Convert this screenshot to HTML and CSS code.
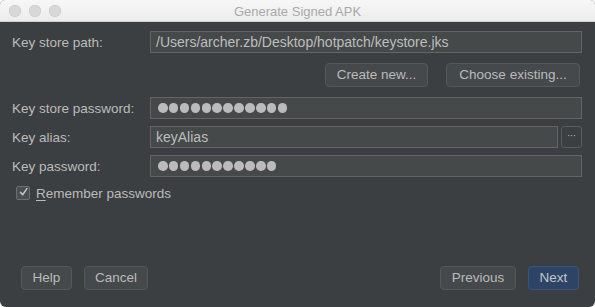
FILE: index.html
```html
<!DOCTYPE html>
<html>
<head>
<meta charset="utf-8">
<link rel="stylesheet" href="styles.css">
</head>
<body>
<div class="window">
  <div class="titlebar">
    <div class="lights">
      <span class="light"></span><span class="light"></span><span class="light"></span>
    </div>
    <div class="title">Generate Signed APK</div>
  </div>
  <div class="content">
    <div class="row">
      <label class="label">Key store path:</label>
      <div class="field">/Users/archer.zb/Desktop/hotpatch/keystore.jks</div>
    </div>
    <div class="actions">
      <button class="btn btn-create">Create new...</button>
      <button class="btn btn-choose">Choose existing...</button>
    </div>
    <div class="row">
      <label class="label">Key store password:</label>
      <div class="field dots">
        <i></i><i></i><i></i><i></i><i></i><i></i><i></i><i></i><i></i><i></i><i></i><i></i>
      </div>
    </div>
    <div class="row row-tight">
      <label class="label">Key alias:</label>
      <div class="field">keyAlias</div>
      <button class="more">···</button>
    </div>
    <div class="row row-tight">
      <label class="label">Key password:</label>
      <div class="field dots">
        <i></i><i></i><i></i><i></i><i></i><i></i><i></i><i></i><i></i><i></i><i></i>
      </div>
    </div>
    <div class="check-row">
      <span class="checkbox">
        <svg width="14" height="14" viewBox="0 0 14 14"><path d="M3 7.2 L6 10.5 L11.5 2.5" fill="none" stroke="#c8c8c8" stroke-width="1.8" stroke-linecap="round" stroke-linejoin="round"/></svg>
      </span>
      <span class="check-label"><u>R</u>emember passwords</span>
    </div>
  </div>
  <div class="footer">
    <div class="group">
      <button class="btn btn-help">Help</button>
      <button class="btn btn-cancel">Cancel</button>
    </div>
    <div class="group">
      <button class="btn btn-prev">Previous</button>
      <button class="btn btn-next">Next</button>
    </div>
  </div>
</div>
</body>
</html>
```
FILE: styles.css
```css
html, body {
  margin: 0;
  padding: 0;
  background: #ffffff;
}
body {
  font-family: "Liberation Sans", Arial, sans-serif;
  font-size: 13.5px;
  color: #bbbbbb;
}
.window {
  width: 595px;
  height: 307px;
  background: #3c3f41;
  border-radius: 5px 5px 6px 6px;
  display: flex;
  flex-direction: column;
  overflow: hidden;
  box-sizing: border-box;
}
.titlebar {
  height: 22px;
  flex: none;
  background: linear-gradient(#f7f7f7, #ececec);
  border-bottom: 1px solid #cfcfcf;
  box-sizing: border-box;
  position: relative;
  display: flex;
  align-items: center;
  justify-content: center;
}
.lights {
  position: absolute;
  left: 9px;
  top: 5px;
  display: flex;
  gap: 8px;
}
.light {
  width: 12px;
  height: 12px;
  border-radius: 50%;
  background: #d8d8d8;
  box-shadow: inset 0 0 0 0.5px #c6c6c6;
}
.title {
  color: #a9a9a9;
  font-size: 13px;
  padding-top: 1px;
}
.content {
  padding: 9px 13px 0 12px;
  display: flex;
  flex-direction: column;
}
.row {
  display: flex;
  align-items: center;
  height: 22px;
}
.row-tight {
  margin-top: 7px;
}
.label {
  width: 138px;
  flex: none;
  color: #bbbbbb;
}
.field {
  flex: 1;
  height: 22px;
  box-sizing: border-box;
  background: #45494a;
  border: 1px solid #646464;
  padding: 0 5px;
  display: flex;
  align-items: center;
  color: #bdbdbd;
  font-size: 14px;
  white-space: nowrap;
}
.dots {
  gap: 1.4px;
  padding-left: 7px;
}
.dots i {
  display: block;
  width: 9.5px;
  height: 9.5px;
  border-radius: 50%;
  background: #bbbbbb;
}
.more {
  width: 21px;
  height: 22px;
  margin-left: 3px;
  flex: none;
  box-sizing: border-box;
  background: #3c3f41;
  border: 1px solid #5a5d5f;
  border-radius: 3px;
  color: #bbbbbb;
  font-size: 9px;
  padding: 0 0 2px;
  font-family: "DejaVu Sans", sans-serif;
  line-height: 1;
}
.actions {
  display: flex;
  justify-content: flex-end;
  gap: 18px;
  margin: 10px 2px 10px 0;
}
.btn {
  height: 24px;
  box-sizing: border-box;
  background: #45494b;
  border: 1px solid #555859;
  border-radius: 4px;
  color: #bbbbbb;
  font-family: "Liberation Sans", Arial, sans-serif;
  font-size: 13.5px;
  padding: 0;
  line-height: 22px;
}
.btn-create { width: 103px; }
.btn-choose { width: 134px; }
.check-row {
  display: flex;
  align-items: center;
  margin-top: 9px;
  padding-left: 4px;
  height: 14px;
}
.checkbox {
  width: 14px;
  height: 14px;
  box-sizing: border-box;
  background: #4a4e50;
  border: 1px solid #6e6e6e;
  border-radius: 2px;
  display: flex;
  align-items: center;
  justify-content: center;
}
.checkbox svg {
  display: block;
  margin-top: -2px;
  margin-left: 1px;
}
.check-label {
  margin-left: 6px;
}
.check-label u {
  text-decoration-thickness: 1px;
  text-underline-offset: 2px;
}
.footer {
  margin-top: auto;
  display: flex;
  justify-content: space-between;
  padding: 0 16px 17px 21px;
}
.group {
  display: flex;
  gap: 12px;
}
.btn-help { width: 51px; }
.btn-cancel { width: 64px; }
.btn-prev { width: 76px; }
.btn-next {
  width: 51px;
  background: #2e4467;
  border-color: #3e5477;
  color: #c0c4cc;
}
```
